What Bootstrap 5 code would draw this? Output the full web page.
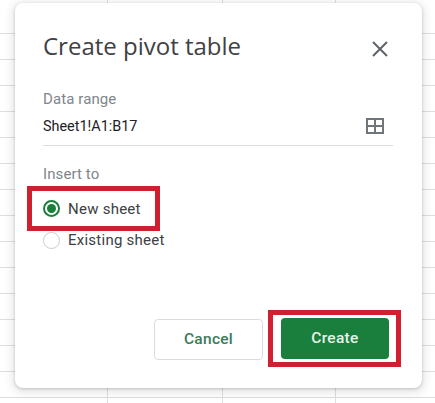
<!doctype html>
<html lang="en"><head><meta charset="utf-8"><title>Create pivot table</title>
<link href="https://cdn.jsdelivr.net/npm/bootstrap@5.3.0/dist/css/bootstrap.min.css" rel="stylesheet">
<style>
html,body{height:100%}
body{margin:0;width:435px;height:403px;overflow:hidden;font-family:Roboto,"Liberation Sans",sans-serif;
background-color:#fff;
background-image:linear-gradient(#dfdfdf,#dfdfdf),linear-gradient(#dfdfdf,#dfdfdf),linear-gradient(#dfdfdf,#dfdfdf),repeating-linear-gradient(to bottom,transparent 0,transparent 25px,#dedede 25px,#dedede 26px);
background-size:1px 100%,1px 100%,1px 100%,100% 100%;background-position:107px 0,222px 0,335px 0,0 8px;background-repeat:no-repeat;padding:3px 13px 15px 15px}
.dlg{width:407px;height:385px;background:#fff;border-radius:8px;box-shadow:0 1px 3px rgba(60,64,67,.25),0 2px 8px 3px rgba(60,64,67,.12);padding:0 28px}
.ttl{font:400 24px/1 "Open Sans",Roboto,sans-serif;color:#3f4144;margin:0;padding-top:31px;height:86px}
.x-btn{background:none;border:0;padding:0;width:16px;height:16px;display:block;margin-top:0;margin-right:6px}
.lbl{font-size:15px;line-height:20px;color:#80868b;letter-spacing:.1px}
.lbl2{margin-top:18px}
.rng{font-size:14.4px;line-height:20px;color:#202124;height:35px;padding-top:6px;border-bottom:1px solid #dadce0;margin-top:2px;margin-right:1px}
.redb{border:5px solid #d0202f;width:133px;height:45px;margin-left:-16px;padding-left:11px;margin-top:2px}
.radl{font-size:15px;line-height:20px;color:#3c4043;letter-spacing:.25px}
.radio{width:17px;height:17px;border-radius:50%;border:2px solid #188038;display:flex;align-items:center;justify-content:center;flex:none}
.radio i{display:block;width:9px;height:9px;border-radius:50%;background:#188038}
.radio.off{border:1px solid #c8cacc}
.rw2{height:20px;margin-top:-1px}
.foot{margin-top:60px;margin-right:-7px}
.b-cancel{width:109px;height:41px;border:1px solid #dadce0;border-radius:4px;background:#fff;color:#3c7a5a;font-size:15.5px;font-weight:500;letter-spacing:.3px;margin-top:9px}
.redc{border:5px solid #d0202f;width:133px;height:57px;padding:3px 8px;margin-left:5px}
.b-create{width:108px;height:41px;border:0;border-radius:4px;background:#1a7f3c;color:#e6f4ea;font-size:15.5px;font-weight:500;letter-spacing:.3px}
.gi{margin-top:1px;margin-right:9px}
</style></head>
<body>
<div class="dlg">
  <div class="d-flex justify-content-between align-items-start ttl">
    <h1 class="ttl p-0 m-0">Create pivot table</h1>
    <button class="x-btn" aria-label="Close"><svg width="16" height="16" viewBox="0 0 16 16"><path d="M1 1 15 15M15 1 1 15" stroke="#5f6368" stroke-width="2" fill="none"/></svg></button>
  </div>
  <div class="lbl">Data range</div>
  <div class="rng d-flex justify-content-between">
    <span>Sheet1!A1:B17</span>
    <svg class="gi" width="18" height="16" viewBox="0 0 18 16"><path d="M1 1h16v14H1zM9 1v14M1 8h16" stroke="#70757a" stroke-width="2" fill="none"/></svg>
  </div>
  <div class="lbl lbl2">Insert to</div>
  <div class="redb d-flex align-items-center gap-2">
    <span class="radio"><i></i></span><span class="radl">New sheet</span>
  </div>
  <div class="rw2 d-flex align-items-center gap-2">
    <span class="radio off"></span><span class="radl">Existing sheet</span>
  </div>
  <div class="foot d-flex justify-content-end align-items-start">
    <button class="b-cancel">Cancel</button>
    <div class="redc"><button class="b-create">Create</button></div>
  </div>
</div>
</body></html>
